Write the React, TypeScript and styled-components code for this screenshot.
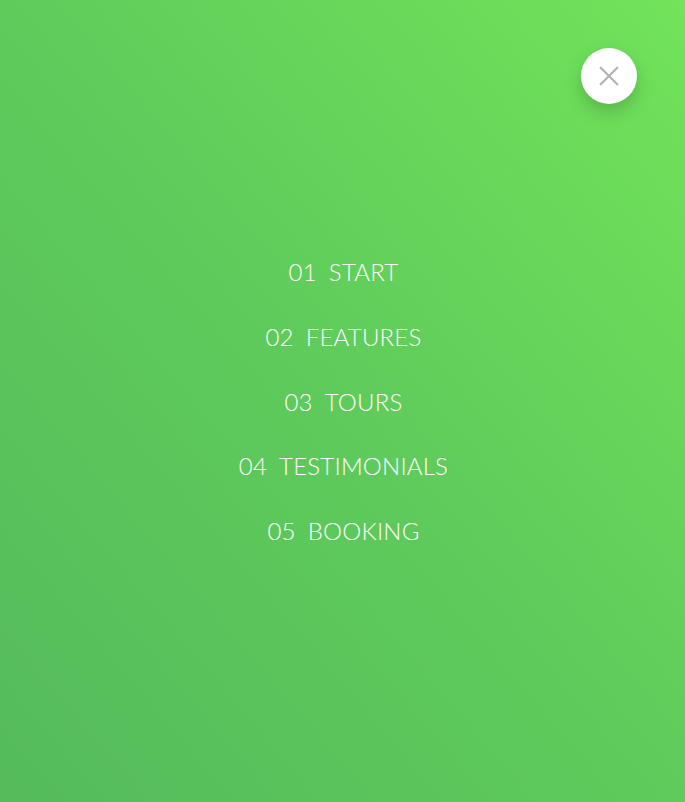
import React from "react";
import styled, { createGlobalStyle } from "styled-components";

const Global = createGlobalStyle`
  html, body { margin: 0; padding: 0; height: 100%; }
  #root { height: 100%; }
  * { box-sizing: border-box; }
`;

const Overlay = styled.nav`
  position: relative;
  width: 100%;
  height: 100vh;
  background-image: linear-gradient(to bottom left, #72e35a 0%, #5fcb5b 50%, #55bb5b 100%);
  display: flex;
  align-items: center;
  justify-content: center;
  font-family: Lato, "Open Sans", sans-serif;
  overflow: hidden;
`;

const CloseButton = styled.button`
  position: absolute;
  top: 48px;
  right: 48px;
  width: 56px;
  height: 56px;
  border-radius: 50%;
  border: none;
  background: #fff;
  box-shadow: 0 8px 18px rgba(0, 0, 0, 0.18);
  display: flex;
  align-items: center;
  justify-content: center;
  padding: 0;
  cursor: pointer;
`;

const List = styled.ul`
  list-style: none;
  margin: 0 0 0 2px;
  padding: 0;
  display: flex;
  flex-direction: column;
  align-items: center;
  gap: 0;
`;

const Item = styled.li`
  height: 64.75px;
  display: flex;
  align-items: center;
`;

const Link = styled.a`
  color: #fff;
  text-decoration: none;
  font-weight: 300;
  font-size: 24px;
  text-transform: uppercase;
  letter-spacing: 0.2px;
  display: flex;
  align-items: baseline;
`;

const Num = styled.span`
  margin-right: 12px;
`;

const items = [
  ["01", "Start"],
  ["02", "Features"],
  ["03", "Tours"],
  ["04", "Testimonials"],
  ["05", "Booking"],
];

export default function App() {
  return (
    <>
      <Global />
      <Overlay>
        <CloseButton aria-label="Close">
          <svg width="20" height="20" viewBox="0 0 20 20">
            <path d="M1 1 L19 19 M19 1 L1 19" stroke="#b0b0b0" strokeWidth="2" fill="none" />
          </svg>
        </CloseButton>
        <List>
          {items.map(([n, t]) => (
            <Item key={n}>
              <Link href="#">
                <Num>{n}</Num>
                {t}
              </Link>
            </Item>
          ))}
        </List>
      </Overlay>
    </>
  );
}
